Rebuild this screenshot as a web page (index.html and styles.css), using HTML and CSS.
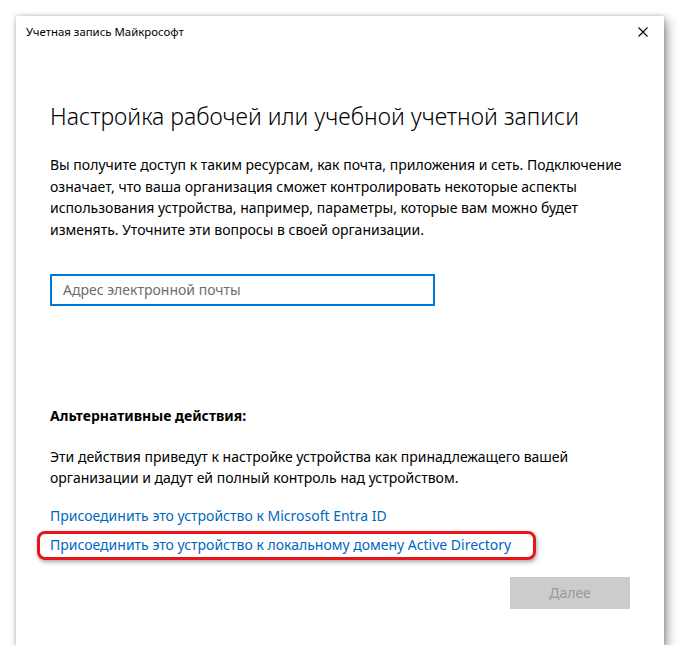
FILE: index.html
```html
<!DOCTYPE html>
<html lang="ru">
<head>
<meta charset="utf-8">
<title>Учетная запись Майкрософт</title>
<link rel="stylesheet" href="styles.css">
</head>
<body>
<div class="window">
  <div class="titlebar">
    <span class="title">Учетная запись Майкрософт</span>
    <span class="close" aria-label="Закрыть">
      <svg width="10" height="10" viewBox="0 0 10 10"><path d="M0.5 0.5 L9.5 9.5 M9.5 0.5 L0.5 9.5" stroke="#000" stroke-width="1.1" fill="none"/></svg>
    </span>
  </div>
  <div class="content">
    <h1 class="heading">Настройка рабочей или учебной учетной записи</h1>
    <p class="text">Вы получите доступ к таким ресурсам, как почта, приложения и сеть. Подключение означает, что ваша организация сможет контролировать некоторые аспекты использования устройства, например, параметры, которые вам можно будет изменять. Уточните эти вопросы в своей организации.</p>
    <div class="input">Адрес электронной почты</div>
    <div class="alt-title">Альтернативные действия:</div>
    <p class="text alt-text">Эти действия приведут к настройке устройства как принадлежащего вашей организации и дадут ей полный контроль над устройством.</p>
    <div class="links">
      <a class="link" href="#">Присоединить это устройство к Microsoft Entra ID</a>
      <a class="link highlighted" href="#">Присоединить это устройство к локальному домену Active Directory</a>
    </div>
    <div class="footer">
      <div class="button">Далее</div>
    </div>
  </div>
</div>
</body>
</html>
```

FILE: styles.css
```css
html, body {
  margin: 0;
  padding: 0;
  background: #ffffff;
}
body {
  padding: 16px 0 0 16px;
  font-family: "Noto Sans", "Open Sans", sans-serif;
  color: #000;
}
.window {
  width: 648px;
  height: 629px;
  background: #fff;
  box-shadow: 0 0 4px rgba(0,0,0,0.25), 4px 5px 10px rgba(0,0,0,0.35);
  box-sizing: border-box;
}
.titlebar {
  height: 30px;
  display: flex;
  align-items: center;
  justify-content: space-between;
  padding: 0 16px 0 10px;
}
.title {
  font-size: 11.4px;
  line-height: 30px;
  padding-top: 1px;
}
.close {
  display: flex;
  width: 10px;
  height: 10px;
  margin-top: 1px;
}
.content {
  padding: 0 34px 0 34px;
}
.heading {
  margin: 54px 0 0 0;
  font-size: 23px;
  line-height: 32px;
  font-weight: 300;
  letter-spacing: 0;
}
.text {
  margin: 22px 0 0 0;
  font-size: 14px;
  line-height: 21.5px;
}
.input {
  margin-top: 34px;
  width: 385px;
  height: 32px;
  box-sizing: border-box;
  border: 2px solid #0078d7;
  padding: 0 11px;
  font-size: 14px;
  line-height: 28px;
  color: #6d6d6d;
}
.alt-title {
  margin-top: 99px;
  font-size: 14px;
  line-height: 22px;
  font-weight: 700;
}
.alt-text {
  margin-top: 19px;
  line-height: 21px;
}
.links {
  margin-top: 17px;
  display: flex;
  flex-direction: column;
  align-items: flex-start;
  gap: 7px;
}
.link {
  font-size: 14px;
  line-height: 22px;
  color: #0067c0;
  text-decoration: none;
}
.highlighted {
  position: relative;
}
.highlighted::after {
  content: "";
  position: absolute;
  left: -13px;
  right: -25px;
  top: -3px;
  bottom: -4px;
  border: 3px solid #e8141c;
  border-radius: 8px;
  box-shadow: 1px 2px 4px rgba(0,0,0,0.35);
}
.footer {
  margin-top: 21px;
  display: flex;
  justify-content: flex-end;
}
.button {
  width: 120px;
  height: 32px;
  background: #cccccc;
  color: #9a9a9a;
  font-size: 14px;
  line-height: 32px;
  text-align: center;
}
```
